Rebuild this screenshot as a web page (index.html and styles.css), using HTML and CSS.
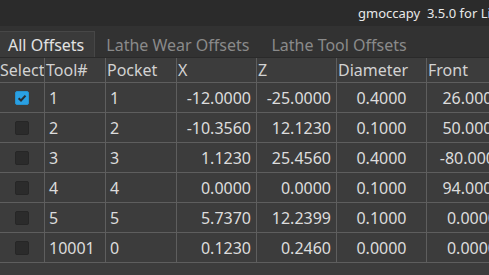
FILE: index.html
```html
<!DOCTYPE html>
<html>
<head>
<meta charset="utf-8">
<link rel="stylesheet" href="styles.css">
</head>
<body>
<div class="titlebar"><span class="title">gmoccapy&nbsp; 3.5.0 for LinuxCNC</span></div>
<div class="tabbar">
  <div class="tab active">All Offsets</div>
  <div class="tab">Lathe Wear Offsets</div>
  <div class="tab">Lathe Tool Offsets</div>
</div>
<div class="table">
  <div class="row head">
    <div class="cell h">Select</div>
    <div class="cell h">Tool#</div>
    <div class="cell h">Pocket</div>
    <div class="cell h">X</div>
    <div class="cell h">Z</div>
    <div class="cell h">Diameter</div>
    <div class="cell h">Front</div>
  </div>
  <div class="row">
    <div class="cell sel"><span class="check on"><svg width="14" height="14" viewBox="0 0 14 14"><path d="M3.6 7.2 L6 9.5 L10.5 4.6" fill="none" stroke="#2a2e33" stroke-width="2"/></svg></span></div>
    <div class="cell l">1</div><div class="cell l">1</div>
    <div class="cell r">-12.0000</div><div class="cell r">-25.0000</div>
    <div class="cell c">0.4000</div><div class="cell c">26.0000</div>
  </div>
  <div class="row">
    <div class="cell sel"><span class="check"></span></div>
    <div class="cell l">2</div><div class="cell l">2</div>
    <div class="cell r">-10.3560</div><div class="cell r">12.1230</div>
    <div class="cell c">0.1000</div><div class="cell c">50.0000</div>
  </div>
  <div class="row">
    <div class="cell sel"><span class="check"></span></div>
    <div class="cell l">3</div><div class="cell l">3</div>
    <div class="cell r">1.1230</div><div class="cell r">25.4560</div>
    <div class="cell c">0.4000</div><div class="cell c">-80.0000</div>
  </div>
  <div class="row">
    <div class="cell sel"><span class="check"></span></div>
    <div class="cell l">4</div><div class="cell l">4</div>
    <div class="cell r">0.0000</div><div class="cell r">0.0000</div>
    <div class="cell c">0.1000</div><div class="cell c">94.0000</div>
  </div>
  <div class="row">
    <div class="cell sel"><span class="check"></span></div>
    <div class="cell l">5</div><div class="cell l">5</div>
    <div class="cell r">5.7370</div><div class="cell r">12.2399</div>
    <div class="cell c">0.1000</div><div class="cell c">0.0000</div>
  </div>
  <div class="row">
    <div class="cell sel"><span class="check"></span></div>
    <div class="cell l">10001</div><div class="cell l">0</div>
    <div class="cell r">0.1230</div><div class="cell r">0.2460</div>
    <div class="cell c">0.0000</div><div class="cell c">0.0000</div>
  </div>
</div>
</body>
</html>
```
FILE: styles.css
```css
html, body {
  margin: 0;
  padding: 0;
  background: #3c3c3c;
  font-family: "Noto Sans", sans-serif;
  overflow: hidden;
  width: 489px;
  height: 275px;
}
.titlebar {
  height: 26px;
  background: #2b2b2b;
  display: flex;
  align-items: center;
  padding-left: 358px;
  white-space: nowrap;
  overflow: hidden;
}
.title {
  font-size: 13px;
  color: #e8e8e8;
}
.tabbar {
  height: 32px;
  box-sizing: border-box;
  background: #323232;
  display: flex;
  align-items: flex-end;
  border-bottom: 1px solid #2a2a2a;
  white-space: nowrap;
}
.tab {
  height: 26px;
  box-sizing: border-box;
  padding: 0 10px 0 10px;
  font-size: 16px;
  line-height: 26px;
  color: #8a8a8a;
  border: 1px solid transparent;
  border-bottom: none;
}
.tab.active {
  color: #e2e2e2;
  background: #3a3a3a;
  border-color: #474747;
  padding-left: 8px;
  border-left: none;
}
.table {
  width: 600px;
}
.row {
  display: grid;
  grid-template-columns: 45px 61px 71px 80px 80px 90px 91px;
  height: 30px;
  box-sizing: border-box;
  border-bottom: 1px solid #5e5e5e;
}
.row.head {
  height: 25px;
}
.cell {
  border-right: 1px solid #5e5e5e;
  font-size: 16px;
  color: #dcdcdc;
  display: flex;
  align-items: center;
  white-space: nowrap;
  overflow: hidden;
}
.cell.h {
  color: #d2d2d2;
  padding-left: 0;
}
.cell.h + .cell.h {
  padding-left: 1px;
}
.cell.l {
  padding-left: 4px;
}
.cell.r {
  justify-content: flex-end;
  padding-right: 5px;
}
.cell.c {
  justify-content: center;
}
.cell.sel {
  justify-content: center;
  padding-right: 1px;
}
.check {
  width: 14px;
  height: 14px;
  box-sizing: border-box;
  border-radius: 2px;
  background: #2b2b2b;
  border: 1px solid #262626;
  display: block;
}
.check.on {
  background: #2aa0e3;
  border-color: #2592cf;
}
.check svg {
  display: block;
  margin: -1px;
}
```
